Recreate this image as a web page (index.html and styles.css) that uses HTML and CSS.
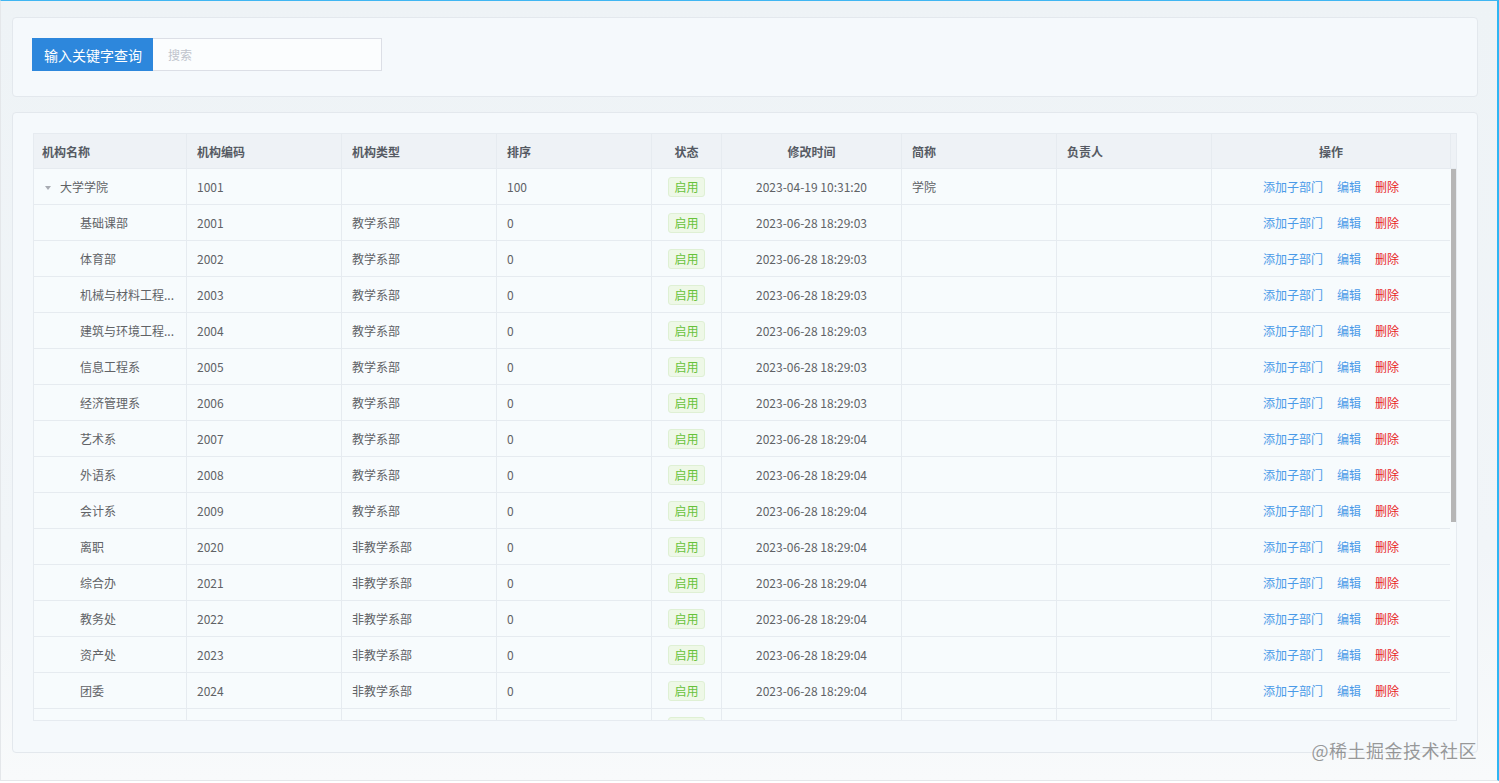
FILE: index.html
```html
<!DOCTYPE html>
<html lang="zh-CN">
<head>
  <meta charset="UTF-8" />
  <title>机构管理</title>
  <link rel="stylesheet" href="styles.css">
</head>
<body>
  <div class="frame">
    <!-- Search bar card -->
    <div class="card search-card">
      <div class="search">
        <span class="search-label">输入关键字查询</span>
        <input class="search-input" type="text" placeholder="搜索">
      </div>
    </div>

    <!-- Table card -->
    <div class="card table-card">
      <div class="table">
        <div class="table-head">
          <table>
            <colgroup>
              <col class="c-name"><col class="c-code"><col class="c-type"><col class="c-sort"><col class="c-status">
              <col class="c-time"><col class="c-short"><col class="c-owner"><col class="c-ops">
            </colgroup>
            <tr>
              <th>机构名称</th><th>机构编码</th><th>机构类型</th><th>排序</th><th class="center">状态</th>
              <th class="center">修改时间</th><th>简称</th><th>负责人</th><th class="center">操作</th>
            </tr>
          </table>
          <div class="gutter"></div>
        </div>
        <div class="table-body">
          <div class="rows">
          <table>
            <colgroup>
              <col class="c-name"><col class="c-code"><col class="c-type"><col class="c-sort"><col class="c-status">
              <col class="c-time"><col class="c-short"><col class="c-owner"><col class="c-ops">
            </colgroup>
            <tr>
              <td><span class="caret"></span>大学学院</td><td>1001</td><td></td><td>100</td>
              <td class="center"><span class="tag">启用</span></td><td class="center">2023-04-19 10:31:20</td>
              <td>学院</td><td></td>
              <td class="center ops"><a>添加子部门</a><a>编辑</a><a class="danger">删除</a></td>
            </tr>
            <tr>
              <td class="child">基础课部</td><td>2001</td><td>教学系部</td><td>0</td>
              <td class="center"><span class="tag">启用</span></td><td class="center">2023-06-28 18:29:03</td>
              <td></td><td></td>
              <td class="center ops"><a>添加子部门</a><a>编辑</a><a class="danger">删除</a></td>
            </tr>
            <tr>
              <td class="child">体育部</td><td>2002</td><td>教学系部</td><td>0</td>
              <td class="center"><span class="tag">启用</span></td><td class="center">2023-06-28 18:29:03</td>
              <td></td><td></td>
              <td class="center ops"><a>添加子部门</a><a>编辑</a><a class="danger">删除</a></td>
            </tr>
            <tr>
              <td class="child">机械与材料工程...</td><td>2003</td><td>教学系部</td><td>0</td>
              <td class="center"><span class="tag">启用</span></td><td class="center">2023-06-28 18:29:03</td>
              <td></td><td></td>
              <td class="center ops"><a>添加子部门</a><a>编辑</a><a class="danger">删除</a></td>
            </tr>
            <tr>
              <td class="child">建筑与环境工程...</td><td>2004</td><td>教学系部</td><td>0</td>
              <td class="center"><span class="tag">启用</span></td><td class="center">2023-06-28 18:29:03</td>
              <td></td><td></td>
              <td class="center ops"><a>添加子部门</a><a>编辑</a><a class="danger">删除</a></td>
            </tr>
            <tr>
              <td class="child">信息工程系</td><td>2005</td><td>教学系部</td><td>0</td>
              <td class="center"><span class="tag">启用</span></td><td class="center">2023-06-28 18:29:03</td>
              <td></td><td></td>
              <td class="center ops"><a>添加子部门</a><a>编辑</a><a class="danger">删除</a></td>
            </tr>
            <tr>
              <td class="child">经济管理系</td><td>2006</td><td>教学系部</td><td>0</td>
              <td class="center"><span class="tag">启用</span></td><td class="center">2023-06-28 18:29:03</td>
              <td></td><td></td>
              <td class="center ops"><a>添加子部门</a><a>编辑</a><a class="danger">删除</a></td>
            </tr>
            <tr>
              <td class="child">艺术系</td><td>2007</td><td>教学系部</td><td>0</td>
              <td class="center"><span class="tag">启用</span></td><td class="center">2023-06-28 18:29:04</td>
              <td></td><td></td>
              <td class="center ops"><a>添加子部门</a><a>编辑</a><a class="danger">删除</a></td>
            </tr>
            <tr>
              <td class="child">外语系</td><td>2008</td><td>教学系部</td><td>0</td>
              <td class="center"><span class="tag">启用</span></td><td class="center">2023-06-28 18:29:04</td>
              <td></td><td></td>
              <td class="center ops"><a>添加子部门</a><a>编辑</a><a class="danger">删除</a></td>
            </tr>
            <tr>
              <td class="child">会计系</td><td>2009</td><td>教学系部</td><td>0</td>
              <td class="center"><span class="tag">启用</span></td><td class="center">2023-06-28 18:29:04</td>
              <td></td><td></td>
              <td class="center ops"><a>添加子部门</a><a>编辑</a><a class="danger">删除</a></td>
            </tr>
            <tr>
              <td class="child">离职</td><td>2020</td><td>非教学系部</td><td>0</td>
              <td class="center"><span class="tag">启用</span></td><td class="center">2023-06-28 18:29:04</td>
              <td></td><td></td>
              <td class="center ops"><a>添加子部门</a><a>编辑</a><a class="danger">删除</a></td>
            </tr>
            <tr>
              <td class="child">综合办</td><td>2021</td><td>非教学系部</td><td>0</td>
              <td class="center"><span class="tag">启用</span></td><td class="center">2023-06-28 18:29:04</td>
              <td></td><td></td>
              <td class="center ops"><a>添加子部门</a><a>编辑</a><a class="danger">删除</a></td>
            </tr>
            <tr>
              <td class="child">教务处</td><td>2022</td><td>非教学系部</td><td>0</td>
              <td class="center"><span class="tag">启用</span></td><td class="center">2023-06-28 18:29:04</td>
              <td></td><td></td>
              <td class="center ops"><a>添加子部门</a><a>编辑</a><a class="danger">删除</a></td>
            </tr>
            <tr>
              <td class="child">资产处</td><td>2023</td><td>非教学系部</td><td>0</td>
              <td class="center"><span class="tag">启用</span></td><td class="center">2023-06-28 18:29:04</td>
              <td></td><td></td>
              <td class="center ops"><a>添加子部门</a><a>编辑</a><a class="danger">删除</a></td>
            </tr>
            <tr>
              <td class="child">团委</td><td>2024</td><td>非教学系部</td><td>0</td>
              <td class="center"><span class="tag">启用</span></td><td class="center">2023-06-28 18:29:04</td>
              <td></td><td></td>
              <td class="center ops"><a>添加子部门</a><a>编辑</a><a class="danger">删除</a></td>
            </tr>
            <tr>
              <td class="child"></td><td></td><td></td><td></td>
              <td class="center"><span class="tag">启用</span></td><td></td>
              <td></td><td></td><td></td>
            </tr>
          </table>
          </div>
          <!-- Scrollbar track with thumb -->
          <div class="scroll-track"><div class="scroll-thumb"></div></div>
        </div>
      </div>
    </div>

    <!-- Watermark -->
    <div class="watermark">@稀土掘金技术社区</div>
  </div>
</body>
</html>
```

FILE: styles.css
```css
*, *::before, *::after {
  box-sizing: border-box;
}

html, body {
  margin: 0;
  padding: 0;
  height: 100vh;
  overflow: hidden;
}

body {
  font-family: "Noto Sans CJK SC", "Noto Sans", sans-serif;
  font-size: 12px;
  color: #606266;
  background: #ffffff;
}

/* Window frame with the blue edge on top and right */
.frame {
  position: relative;
  height: 781px;
  width: 1499px;
  display: flex;
  flex-direction: column;
  gap: 15px;
  padding: 16px 19px 0 11px;
  border-top: 1px solid #40b6f2;
  border-right: 2px solid #2fb6f3;
  border-left: 1px solid #e4e7ea;
  border-bottom: 1px solid #e4e7ea;
  background: linear-gradient(180deg, #eef3f6 0%, #f1f5f8 70%, #f8fafb 100%);
}

.card {
  background: #f5f9fc;
  border: 1px solid #e3e8ed;
  border-radius: 4px;
}

/* Search card */
.search-card {
  height: 80px;
  padding: 20px 19px;
}

.search {
  display: flex;
  height: 33px;
}

.search-label {
  display: flex;
  align-items: center;
  padding: 0 11px 0 12px;
  background: #2d87dc;
  color: #ffffff;
  font-size: 14px;
}

.search-input {
  width: 229px;
  height: 33px;
  border: 1px solid #dcdfe6;
  border-left: none;
  background: #fbfdfe;
  padding: 0 15px;
  font-family: inherit;
  font-size: 12px;
  outline: none;
}

.search-input::placeholder {
  color: #c0c4cc;
}

/* Table card */
.table-card {
  height: 641px;
  padding: 20px 20px;
}

.table {
  width: 1424px;
  border: 1px solid #e6ebf0;
  border-right: none;
}

.table table {
  border-collapse: separate;
  border-spacing: 0;
  table-layout: fixed;
  width: 1417px;
}

.table-head {
  display: flex;
  background: #eef2f6;
}

.gutter {
  width: 6px;
  border-bottom: 1px solid #e6ebf0;
  border-right: 1px solid #e6ebf0;
}

.table-body {
  display: flex;
  height: 551px;
  overflow: hidden;
  background: #f7fbfd;
  border-right: 1px solid #e6ebf0;
}

.rows {
  width: 1417px;
  overflow: hidden;
}

.scroll-track {
  width: 6px;
  padding-left: 1px;
}

.scroll-thumb {
  height: 353px;
  background: #b6b6b6;
}

.c-name { width: 153px; }
.c-code { width: 155px; }
.c-type { width: 155px; }
.c-sort { width: 155px; }
.c-status { width: 70px; }
.c-time { width: 180px; }
.c-short { width: 155px; }
.c-owner { width: 155px; }
.c-ops { width: 239px; }

th, td {
  height: 36px;
  padding: 0 10px;
  text-align: left;
  border-right: 1px solid #e6ebf0;
  border-bottom: 1px solid #e6ebf0;
  white-space: nowrap;
  overflow: hidden;
}

th {
  height: 35px;
  font-weight: 600;
  color: #555a63;
  background: #eef2f6;
}

th:first-child, td:first-child {
  padding-left: 8px;
}

td.child {
  padding-left: 46px;
}

.center {
  text-align: center;
}

/* Tree expand caret */
.caret {
  display: inline-block;
  width: 0;
  height: 0;
  margin: 0 9px 2px 3px;
  border-left: 3.5px solid transparent;
  border-right: 3.5px solid transparent;
  border-top: 4px solid #a8abb2;
  vertical-align: middle;
}

/* Status tag */
.tag {
  display: inline-block;
  height: 20px;
  line-height: 18px;
  padding: 0 5px;
  font-size: 12px;
  color: #67c23a;
  background: #eef8e7;
  border: 1px solid #dff0d4;
  border-radius: 3px;
}

/* Action links */
.ops a {
  color: #4a9ae8;
  margin: 0 7px;
  cursor: pointer;
}

.ops a.danger {
  color: #e8231f;
}

.watermark {
  position: absolute;
  right: 20px;
  bottom: 17px;
  font-size: 18px;
  color: rgba(120, 120, 120, 0.75);
  letter-spacing: 0.5px;
}
```
